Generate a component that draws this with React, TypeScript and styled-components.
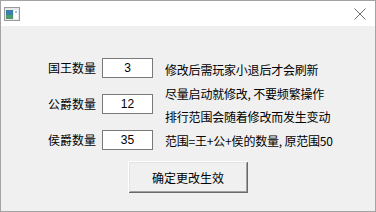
import React from "react";
import styled, { createGlobalStyle } from "styled-components";

const GlobalStyle = createGlobalStyle`
  html, body {
    margin: 0;
    padding: 0;
    background: #ffffff;
  }
  body {
    font-family: "Noto Sans CJK SC", "Liberation Sans", sans-serif;
    font-size: 12px;
    color: #000000;
  }
`;

const Window = styled.div`
  width: 376px;
  height: 212px;
  box-sizing: border-box;
  border: 1px solid #a3a3a3;
  display: flex;
  flex-direction: column;
  background: #f0f0f0;
`;

const TitleBar = styled.div`
  height: 25px;
  flex: none;
  background: #ffffff;
  display: flex;
  align-items: center;
  justify-content: space-between;
  padding: 0 9px 0 3px;
`;

const CloseButton = styled.div`
  width: 12px;
  height: 12px;
  display: flex;
  margin-top: 1px;
`;

const Body = styled.div`
  flex: 1;
  display: flex;
  flex-direction: column;
  padding-top: 32px;
`;

const MainRow = styled.div`
  display: flex;
  align-items: flex-start;
  padding-left: 47px;
`;

const FieldColumn = styled.div`
  display: flex;
  flex-direction: column;
  gap: 16px;
`;

const FieldRow = styled.div`
  display: flex;
  align-items: center;
  height: 20px;
`;

const FieldLabel = styled.span`
  width: 48px;
  margin-right: 6px;
  font-size: 12px;
  line-height: 20px;
  white-space: nowrap;
`;

const NumberBox = styled.input`
  width: 51px;
  height: 20px;
  box-sizing: border-box;
  border: 1px solid #7a7a7a;
  background: #ffffff;
  padding: 0;
  margin: 0;
  text-align: center;
  font-family: "Liberation Sans", "Noto Sans CJK SC", sans-serif;
  font-size: 12px;
  color: #000000;
  outline: none;
`;

const NoteColumn = styled.div`
  display: flex;
  flex-direction: column;
  margin-left: 12px;
`;

const NoteLine = styled.div`
  line-height: 23.5px;
  font-size: 12px;
  letter-spacing: -0.2px;
  white-space: nowrap;
`;

const ButtonRow = styled.div`
  display: flex;
  justify-content: center;
  margin-top: 9px;
`;

const ApplyButton = styled.button`
  width: 120px;
  height: 32px;
  box-sizing: border-box;
  margin: 0;
  padding: 0;
  border: none;
  background: #f0f0f0;
  box-shadow: inset 1px 1px 0 #ffffff, inset -1px -1px 0 #696969,
    inset 2px 2px 0 #e3e3e3, inset -2px -2px 0 #a0a0a0;
  font-family: "Noto Sans CJK SC", sans-serif;
  font-size: 12px;
  color: #000000;
`;

const fields = [
  { label: "国王数量", value: "3" },
  { label: "公爵数量", value: "12" },
  { label: "侯爵数量", value: "35" },
];

const notes = [
  "修改后需玩家小退后才会刷新",
  "尽量启动就修改, 不要频繁操作",
  "排行范围会随着修改而发生变动",
  "范围=王+公+侯的数量, 原范围50",
];

const AppIcon = () => (
  <svg width="16" height="14" viewBox="0 0 16 14">
    <rect x="0.5" y="0.5" width="15" height="13" fill="#e8e8e8" stroke="#9a9a9a" />
    <rect x="2" y="3" width="7" height="9" fill="#3b7fa8" />
    <rect x="2" y="8" width="7" height="4" fill="#4f9a6a" />
    <rect x="10" y="3" width="4" height="9" fill="#ffffff" />
    <rect x="11" y="4" width="2" height="2" fill="#9ac0d8" />
  </svg>
);

export default function App() {
  return (
    <>
      <GlobalStyle />
      <Window>
        <TitleBar>
          <AppIcon />
          <CloseButton>
            <svg width="12" height="12" viewBox="0 0 12 12">
              <path d="M0.5 0.5 L11.5 11.5 M11.5 0.5 L0.5 11.5" stroke="#6f6f6f" strokeWidth="1" fill="none" />
            </svg>
          </CloseButton>
        </TitleBar>
        <Body>
          <MainRow>
            <FieldColumn>
              {fields.map((f) => (
                <FieldRow key={f.label}>
                  <FieldLabel>{f.label}</FieldLabel>
                  <NumberBox defaultValue={f.value} />
                </FieldRow>
              ))}
            </FieldColumn>
            <NoteColumn>
              {notes.map((n) => (
                <NoteLine key={n}>{n}</NoteLine>
              ))}
            </NoteColumn>
          </MainRow>
          <ButtonRow>
            <ApplyButton>确定更改生效</ApplyButton>
          </ButtonRow>
        </Body>
      </Window>
    </>
  );
}
